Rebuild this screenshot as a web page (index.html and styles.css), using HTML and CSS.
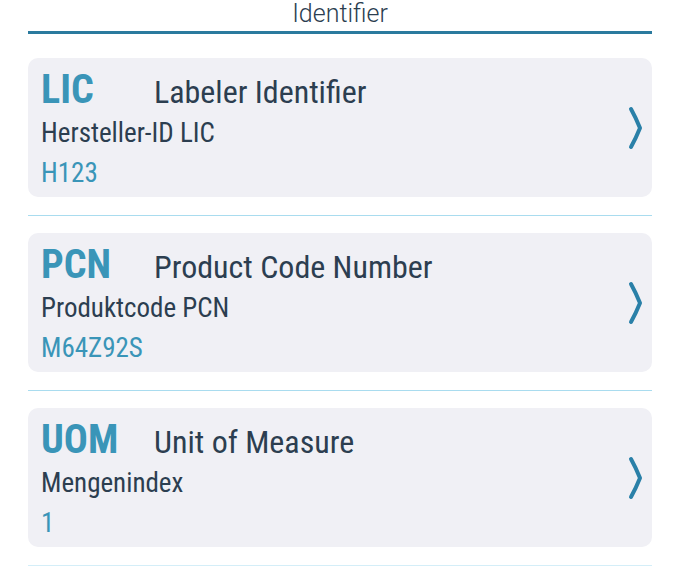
FILE: index.html
```html
<!DOCTYPE html>
<html lang="de">
<head>
    <meta charset="UTF-8">
    <meta name="viewport" content="width=device-width, initial-scale=1.0">
    <title>Identifier</title>
    <link rel="stylesheet" href="styles.css">
</head>
<body>
    <div id="container">
        <div class="header">
            <p class="header-title">Identifier</p>
        </div>
        <div class="list">
            <div class="item">
                <div class="item-text">
                    <div class="item-top">
                        <span class="code">LIC</span>
                        <span class="name">Labeler Identifier</span>
                    </div>
                    <p class="label">Hersteller-ID LIC</p>
                    <p class="value">H123</p>
                </div>
                <svg class="arrow" width="16" height="46" viewBox="0 0 16 46">
                    <path d="M3 3 Q8 12 12 22 Q8 32 3 41" fill="none" stroke="#2a80a8" stroke-width="4" stroke-linecap="round" stroke-linejoin="round" />
                </svg>
            </div>
            <div class="line"></div>
            <div class="item">
                <div class="item-text">
                    <div class="item-top">
                        <span class="code">PCN</span>
                        <span class="name">Product Code Number</span>
                    </div>
                    <p class="label">Produktcode PCN</p>
                    <p class="value">M64Z92S</p>
                </div>
                <svg class="arrow" width="16" height="46" viewBox="0 0 16 46">
                    <path d="M3 3 Q8 12 12 22 Q8 32 3 41" fill="none" stroke="#2a80a8" stroke-width="4" stroke-linecap="round" stroke-linejoin="round" />
                </svg>
            </div>
            <div class="line"></div>
            <div class="item">
                <div class="item-text">
                    <div class="item-top">
                        <span class="code">UOM</span>
                        <span class="name">Unit of Measure</span>
                    </div>
                    <p class="label">Mengenindex</p>
                    <p class="value">1</p>
                </div>
                <svg class="arrow" width="16" height="46" viewBox="0 0 16 46">
                    <path d="M3 3 Q8 12 12 22 Q8 32 3 41" fill="none" stroke="#2a80a8" stroke-width="4" stroke-linecap="round" stroke-linejoin="round" />
                </svg>
            </div>
            <div class="line last"></div>
        </div>
    </div>
</body>
</html>
```
FILE: styles.css
```css
* {
    margin: 0;
    padding: 0;
    box-sizing: border-box;
}
body {
    background-color: #FFFFFF;
    font-family: "Roboto Condensed", "DejaVu Sans Condensed", "Liberation Sans", sans-serif;
    color: #2c3e50;
}
#container {
    width: 100%;
    padding: 0 28px;
}
.header {
    height: 34px;
    border-bottom: 3px solid #2a7a9e;
    text-align: center;
}
.header-title {
    font-family: Roboto, "Liberation Sans", sans-serif;
    font-weight: 300;
    font-size: 25px;
    line-height: 28px;
    color: #2c3e50;
}
.list {
    padding-top: 24px;
}
.item {
    height: 139px;
    background-color: #f0f0f5;
    border-radius: 10px;
    padding: 8px 8px 0 13px;
    display: flex;
    align-items: flex-start;
}
.item-text {
    flex: 1;
}
.item-top {
    display: flex;
    align-items: baseline;
    height: 44px;
}
.code {
    width: 113px;
    font-size: 40px;
    font-weight: bold;
    color: #3a95b8;
}
.name {
    font-size: 32px;
    color: #2c3e50;
}
.label {
    font-size: 27px;
    line-height: 40px;
    margin-top: 3px;
    color: #2c3e50;
}
.value {
    font-size: 27px;
    line-height: 40px;
    color: #3a95b8;
}
.arrow {
    margin-top: 40px;
}
.line {
    height: 1px;
    margin: 18px 0 17px;
    background-color: #a9dcef;
}
.line.last {
    background-color: #d4eef8;
}
```
